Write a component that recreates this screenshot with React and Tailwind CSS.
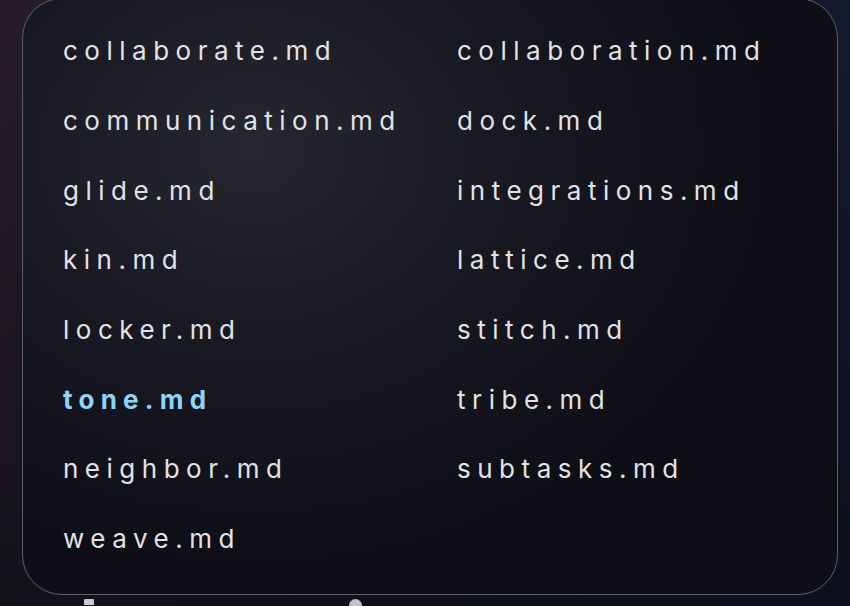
import React from "react";

const left = ["collaborate.md", "communication.md", "glide.md", "kin.md", "locker.md", "tone.md", "neighbor.md", "weave.md"];
const right = ["collaboration.md", "dock.md", "integrations.md", "lattice.md", "stitch.md", "tribe.md", "subtasks.md", null];

function Item({ name }) {
  if (!name) return <div className="h-[69.7px]" />;
  const active = name === "tone.md";
  return (
    <div
      className={
        "h-[69.7px] flex items-center text-[26px] whitespace-nowrap " +
        (active ? "text-[#8dd5f6] font-bold tracking-[0.24em]" : "text-[#e2e2e6] tracking-[0.25em]")
      }
    >
      {name}
    </div>
  );
}

export default function App() {
  const rows = left.map((l, i) => [l, right[i]]);
  return (
    <div
      className="w-[850px] h-[606px] overflow-hidden relative bg-[linear-gradient(90deg,#261c27_0%,#1a1828_40%,#131a2d_100%)]"
      style={{ fontFamily: "Inter, 'Noto Sans', sans-serif" }}
    >
      <div className="absolute inset-0 bg-[linear-gradient(180deg,rgba(0,0,0,0)_0%,rgba(6,8,14,0.55)_100%)]" />
      <div className="relative pl-[22px] pr-[12px] -mt-[2px]">
        <div className="h-[597px] rounded-[40px] border-[1.5px] border-[#5c5e68] bg-[radial-gradient(ellipse_520px_420px_at_230px_150px,#262731_0%,#181922_45%,#0d0e16_100%)] pt-[17px] pl-[40px]">
          <div className="grid grid-cols-[394px_1fr]">
            {rows.map(([a, b], i) => (
              <React.Fragment key={i}>
                <Item name={a} />
                <Item name={b} />
              </React.Fragment>
            ))}
          </div>
        </div>
        <div className="flex items-start h-[20px] pt-[4px]">
          <div className="ml-[62px] w-[10px] h-[6px] bg-[#c9cad0] rounded-t-[1px]" />
          <div className="ml-[255px] w-[13px] h-[13px] rounded-full bg-[#bfc0c8]" />
        </div>
      </div>
    </div>
  );
}
